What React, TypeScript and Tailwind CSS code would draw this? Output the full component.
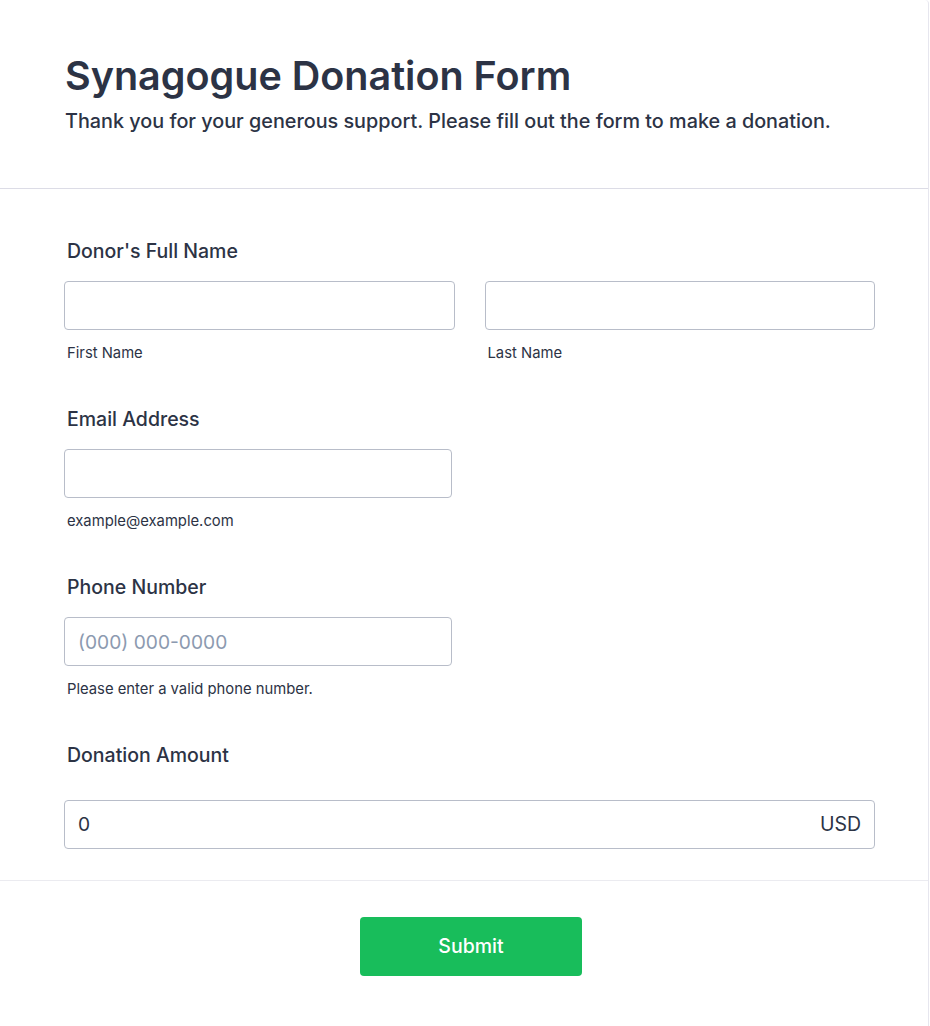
import React from 'react';

const labelCls = 'block pl-[3px] text-[19.5px] leading-[28px] font-medium text-[#2c3345]';
const inputCls =
  'w-full h-[49px] rounded-[4px] border border-[#b8bdc9] bg-white px-[13px] text-[19.2px] text-[#2c3345] placeholder:text-[#8c9ab0] outline-none';
const subCls = 'block pl-[3px] mt-[13px] text-[14.8px] leading-[20px] text-[#2c3345]';

const App: React.FC = () => {
  return (
    <div className="min-h-screen bg-white" style={{ fontFamily: 'Inter, "Noto Sans", sans-serif' }}>
      <div className="w-[929px] min-h-[1026px] border-r border-[#e6e6ee] rounded-tr-[4px] bg-white">
        {/* Header */}
        <div className="pl-[65px] pr-[54px] pt-[52px] pb-[53px] border-b border-[#dcdce6]">
          <h1 className="text-[39.5px] leading-[48px] font-semibold text-[#2c3345]">
            Synagogue Donation Form
          </h1>
          <p className="mt-[7px] text-[19.8px] leading-[28px] font-medium text-[#2c3345]">
            Thank you for your generous support. Please fill out the form to make a donation.
          </p>
        </div>

        {/* Fields */}
        <div className="pl-[64px] pr-[53px] pt-[48px] pb-[31px] border-b border-[#ebebf0]">
          <div>
            <label className={labelCls}>Donor's Full Name</label>
            <div className="mt-[16px] grid grid-cols-2 gap-[30px]">
              <div>
                <input className={inputCls} />
                <span className={subCls}>First Name</span>
              </div>
              <div>
                <input className={inputCls} />
                <span className={subCls}>Last Name</span>
              </div>
            </div>
          </div>

          <div className="mt-[42px]">
            <label className={labelCls}>Email Address</label>
            <div className="mt-[16px] w-[388px]">
              <input className={inputCls} />
              <span className={subCls}>example@example.com</span>
            </div>
          </div>

          <div className="mt-[42px]">
            <label className={labelCls}>Phone Number</label>
            <div className="mt-[16px] w-[388px]">
              <input className={inputCls} placeholder="(000) 000-0000" />
              <span className={subCls}>Please enter a valid phone number.</span>
            </div>
          </div>

          <div className="mt-[42px]">
            <label className={labelCls}>Donation Amount</label>
            <div className="mt-[31px] flex items-center h-[49px] rounded-[4px] border border-[#b8bdc9] px-[13px]">
              <input
                className="flex-1 min-w-0 text-[19.2px] text-[#2c3345] outline-none bg-transparent"
                defaultValue="0"
              />
              <span className="text-[19.5px] text-[#2c3345]">USD</span>
            </div>
          </div>
        </div>

        {/* Submit */}
        <div className="flex justify-center pt-[36px] pl-[14px]">
          <button className="w-[222px] h-[59px] rounded-[4px] bg-[#18bd5b] text-white text-[19.5px] font-medium">
            Submit
          </button>
        </div>
      </div>
    </div>
  );
};

export default App;
